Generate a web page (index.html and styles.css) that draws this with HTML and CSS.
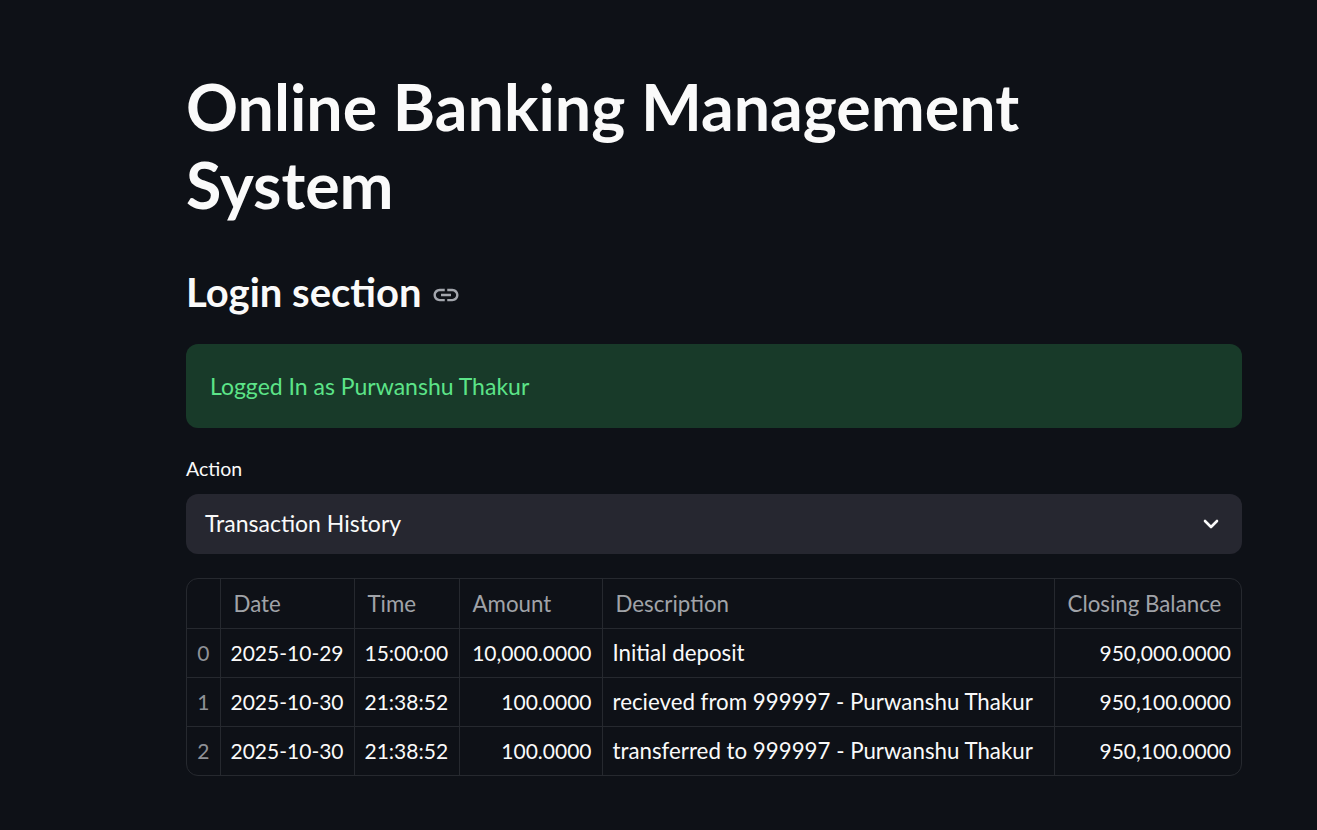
FILE: index.html
```html
<!DOCTYPE html>
<html lang="en">
<head>
<meta charset="utf-8">
<title>Online Banking Management System</title>
<link rel="stylesheet" href="styles.css">
</head>
<body>
<main class="main">
  <h1 class="title">Online Banking Management System</h1>
  <h3 class="subheader">Login section
    <svg class="anchor" viewBox="0 0 24 24" width="30" height="30"><path fill="currentColor" d="M3.9 12c0-1.71 1.39-3.1 3.1-3.1h4V7H7c-2.76 0-5 2.24-5 5s2.24 5 5 5h4v-1.9H7c-1.71 0-3.1-1.39-3.1-3.1zM8 13h8v-2H8v2zm9-6h-4v1.9h4c1.71 0 3.1 1.39 3.1 3.1s-1.39 3.1-3.1 3.1h-4V17h4c2.76 0 5-2.24 5-5s-2.24-5-5-5z"/></svg>
  </h3>
  <div class="alert">Logged In as Purwanshu Thakur</div>
  <div class="field">
    <label class="label">Action</label>
    <div class="select">
      <span>Transaction History</span>
      <svg class="chev" viewBox="0 0 24 24" width="24" height="24"><path d="M6 9l6 6 6-6" fill="none" stroke="currentColor" stroke-width="2.6" stroke-linecap="round" stroke-linejoin="round"/></svg>
    </div>
  </div>
  <div class="grid">
    <table>
      <colgroup>
        <col class="c-idx"><col class="c-date"><col class="c-time"><col class="c-amt"><col class="c-desc"><col class="c-bal">
      </colgroup>
      <thead>
        <tr><th></th><th>Date</th><th>Time</th><th>Amount</th><th>Description</th><th>Closing Balance</th></tr>
      </thead>
      <tbody>
        <tr><td class="idx">0</td><td class="dig">2025-10-29</td><td class="dig">15:00:00</td><td class="num">10,000.0000</td><td>Initial deposit</td><td class="num">950,000.0000</td></tr>
        <tr><td class="idx">1</td><td class="dig">2025-10-30</td><td class="dig">21:38:52</td><td class="num">100.0000</td><td>recieved from 999997 - Purwanshu Thakur</td><td class="num">950,100.0000</td></tr>
        <tr><td class="idx">2</td><td class="dig">2025-10-30</td><td class="dig">21:38:52</td><td class="num">100.0000</td><td>transferred to 999997 - Purwanshu Thakur</td><td class="num">950,100.0000</td></tr>
      </tbody>
    </table>
  </div>
</main>
</body>
</html>
```

FILE: styles.css
```css
html, body {
  margin: 0;
  padding: 0;
  background: #0e1117;
  color: #fafafa;
  font-family: Lato, "Liberation Sans", sans-serif;
}

.main {
  width: 1056px;
  padding: 67px 0 40px 186px;
}

.title {
  margin: 0;
  font-size: 64.5px;
  line-height: 78px;
  font-weight: 700;
  max-width: 1040px;
}

.subheader {
  margin: 42px 0 0;
  font-size: 40px;
  line-height: 54px;
  font-weight: 700;
  display: flex;
  align-items: center;
  gap: 9px;
}

.anchor {
  color: #a3a6ad;
  margin-top: 6px;
}

.alert {
  margin-top: 25px;
  background: #183a29;
  color: #5ce488;
  border-radius: 12px;
  padding: 24px;
  font-size: 23px;
  line-height: 36px;
}

.field {
  margin-top: 26px;
  display: flex;
  flex-direction: column;
  gap: 10px;
}

.label {
  font-size: 19.5px;
  line-height: 30px;
}

.select {
  height: 60px;
  background: #262730;
  border-radius: 12px;
  display: flex;
  align-items: center;
  justify-content: space-between;
  padding: 0 19px 2px 19px;
  box-sizing: border-box;
  font-size: 23px;
}

.chev {
  color: #fafafa;
  margin-top: 2px;
}

.grid {
  margin-top: 24px;
  border: 1px solid #26292f;
  border-radius: 12px;
  overflow: hidden;
}

.grid table {
  width: 100%;
  border-collapse: collapse;
  table-layout: fixed;
  font-size: 22.3px;
}

.c-idx { width: 33px; }
.c-date { width: 134px; }
.c-time { width: 105px; }
.c-amt { width: 143px; }
.c-desc { width: 452px; }
.c-bal { width: 187px; }

.grid th, .grid td {
  height: 49px;
  padding: 0 10px;
  border: 1px solid #26292f;
  white-space: nowrap;
  overflow: hidden;
  box-sizing: border-box;
}

.grid tr:first-child th { border-top: none; }
.grid tr:last-child td { border-bottom: none; }
.grid th:first-child, .grid td:first-child { border-left: none; }
.grid th:last-child, .grid td:last-child { border-right: none; }

.grid th {
  text-align: left;
  font-weight: 400;
  color: #a0a3a8;
  padding-left: 13px;
}

.grid td.dig { font-size: 21px; }

.grid td.num {
  text-align: right;
  font-size: 21px;
}

.grid td.idx {
  text-align: center;
  color: #8e9197;
  padding: 0;
  font-size: 21px;
}
```
